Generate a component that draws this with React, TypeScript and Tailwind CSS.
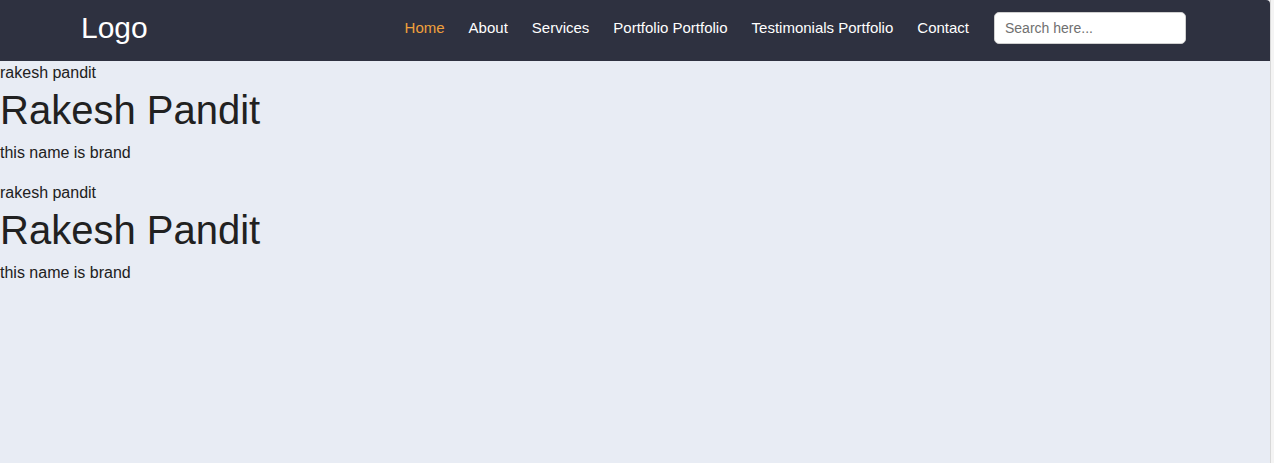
const links = [
  "Home",
  "About",
  "Services",
  "Portfolio Portfolio",
  "Testimonials Portfolio",
  "Contact",
];

function Brand() {
  return (
    <div>
      <p className="text-[16px] leading-[18px] pt-[3px]">rakesh pandit</p>
      <h1 className="text-[40px] leading-[46px] mt-[5px]">Rakesh Pandit</h1>
      <p className="text-[16px] leading-[18px] mt-[11px]">this name is brand</p>
    </div>
  );
}

export default function App() {
  return (
    <div
      className="flex min-h-[463px] bg-[#f4f4f4] text-[#212121]"
      style={{ fontFamily: '"Liberation Sans", Arial, sans-serif' }}
    >
      <div className="w-[1270px] shrink-0 bg-[#e8ecf4] rounded-tr-[4px] overflow-hidden">
        <nav className="h-[61px] bg-[#2e3140] flex items-center pb-[5px] pl-[81px] pr-[84px]">
          <span className="text-white text-[30px] leading-none">Logo</span>
          <ul className="ml-auto flex items-center gap-[24px] text-[15px] text-white">
            {links.map((l) => (
              <li key={l} className={l === "Home" ? "text-[#f0a03c]" : ""}>
                {l}
              </li>
            ))}
          </ul>
          <input
            className="ml-[25px] w-[192px] h-[32px] bg-white rounded-[5px] border border-[#d0d0d0] px-[10px] text-[14px] text-[#333] placeholder:text-[#707070] outline-none"
            placeholder="Search here..."
          />
        </nav>
        <Brand />
        <div className="mt-[19px]">
          <Brand />
        </div>
      </div>
      <div className="flex-1 border-l border-[#d8d8d8]" />
    </div>
  );
}
